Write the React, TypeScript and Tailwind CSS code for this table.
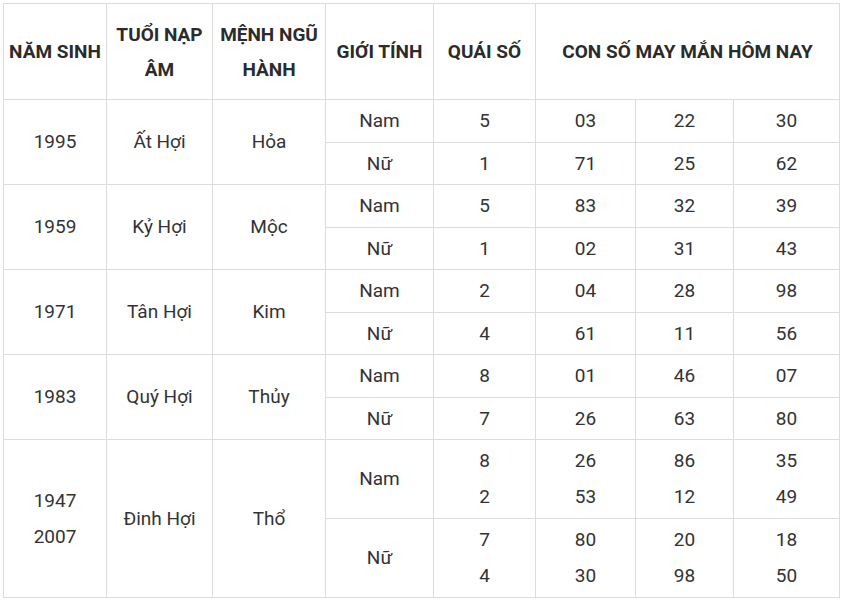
import * as React from 'react';

type Row = {
  year: string[];
  napAm: string;
  menh: string;
  groups: { gender: string; quai: string[]; nums: string[][] }[];
};

const rows: Row[] = [
  {
    year: ['1995'],
    napAm: 'Ất Hợi',
    menh: 'Hỏa',
    groups: [
      { gender: 'Nam', quai: ['5'], nums: [['03', '22', '30']] },
      { gender: 'Nữ', quai: ['1'], nums: [['71', '25', '62']] },
    ],
  },
  {
    year: ['1959'],
    napAm: 'Kỷ Hợi',
    menh: 'Mộc',
    groups: [
      { gender: 'Nam', quai: ['5'], nums: [['83', '32', '39']] },
      { gender: 'Nữ', quai: ['1'], nums: [['02', '31', '43']] },
    ],
  },
  {
    year: ['1971'],
    napAm: 'Tân Hợi',
    menh: 'Kim',
    groups: [
      { gender: 'Nam', quai: ['2'], nums: [['04', '28', '98']] },
      { gender: 'Nữ', quai: ['4'], nums: [['61', '11', '56']] },
    ],
  },
  {
    year: ['1983'],
    napAm: 'Quý Hợi',
    menh: 'Thủy',
    groups: [
      { gender: 'Nam', quai: ['8'], nums: [['01', '46', '07']] },
      { gender: 'Nữ', quai: ['7'], nums: [['26', '63', '80']] },
    ],
  },
  {
    year: ['1947', '2007'],
    napAm: 'Đinh Hợi',
    menh: 'Thổ',
    groups: [
      { gender: 'Nam', quai: ['8', '2'], nums: [['26', '86', '35'], ['53', '12', '49']] },
      { gender: 'Nữ', quai: ['7', '4'], nums: [['80', '20', '18'], ['30', '98', '50']] },
    ],
  },
];

const cell = 'border border-[#dcdcdc] text-center align-middle p-0';
const th = `${cell} font-bold text-[#2b2b2b] leading-[35px]`;

function Lines({ items }: { items: string[] }) {
  return (
    <>
      {items.map((t, i) => (
        <div key={i}>{t}</div>
      ))}
    </>
  );
}

export default function App() {
  return (
    <div className="bg-white w-[841px] h-[603px] pt-[3px] pl-[3px]">
      <table
        className="table-fixed border-collapse text-[19px] leading-[36px] text-[#333333] w-[836px]"
        style={{ fontFamily: 'Roboto, "Noto Sans", sans-serif' }}
      >
        <colgroup>
          <col className="w-[103px]" />
          <col className="w-[106px]" />
          <col className="w-[113px]" />
          <col className="w-[108px]" />
          <col className="w-[102px]" />
          <col className="w-[100px]" />
          <col className="w-[98px]" />
          <col className="w-[106px]" />
        </colgroup>
        <thead>
          <tr className="h-[96px]">
            <th className={th}>NĂM SINH</th>
            <th className={th}>TUỔI NẠP ÂM</th>
            <th className={th}>MỆNH NGŨ HÀNH</th>
            <th className={th}>GIỚI TÍNH</th>
            <th className={th}>QUÁI SỐ</th>
            <th className={th} colSpan={3}>
              CON SỐ MAY MẮN HÔM NAY
            </th>
          </tr>
        </thead>
        <tbody>
          {rows.map((r) =>
            r.groups.map((g, gi) => {
              const tall = g.quai.length > 1;
              const h = tall ? 'h-[79px]' : gi === 0 ? 'h-[43px]' : 'h-[42px]';
              return (
                <tr key={r.napAm + g.gender} className={h}>
                  {gi === 0 && (
                    <>
                      <td className={cell} rowSpan={r.groups.length}>
                        <Lines items={r.year} />
                      </td>
                      <td className={cell} rowSpan={r.groups.length}>
                        {r.napAm}
                      </td>
                      <td className={cell} rowSpan={r.groups.length}>
                        {r.menh}
                      </td>
                    </>
                  )}
                  <td className={cell}>{g.gender}</td>
                  <td className={cell}>
                    <Lines items={g.quai} />
                  </td>
                  {[0, 1, 2].map((c) => (
                    <td key={c} className={cell}>
                      <Lines items={g.nums.map((n) => n[c])} />
                    </td>
                  ))}
                </tr>
              );
            })
          )}
        </tbody>
      </table>
    </div>
  );
}
